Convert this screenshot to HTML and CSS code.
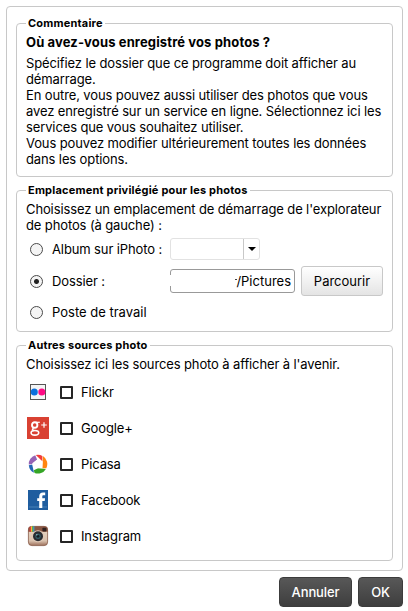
FILE: index.html
```html
<!DOCTYPE html>
<html lang="fr">
<head>
    <meta charset="UTF-8">
    <meta name="viewport" content="width=device-width, initial-scale=1.0">
    <title>Sources photo</title>
    <link rel="stylesheet" href="styles.css">
</head>
<body>
    <form class="dialog">
        <div class="panel">
            <fieldset class="group comment">
                <legend>Commentaire</legend>
                <h1>Où avez-vous enregistré vos photos ?</h1>
                <p>Spécifiez le dossier que ce programme doit afficher au<br>
                démarrage.<br>
                En outre, vous pouvez aussi utiliser des photos que vous<br>
                avez enregistré sur un service en ligne. Sélectionnez ici les<br>
                services que vous souhaitez utiliser.<br>
                Vous pouvez modifier ultérieurement toutes les données<br>
                dans les options.</p>
            </fieldset>

            <fieldset class="group location">
                <legend>Emplacement privilégié pour les photos</legend>
                <p>Choisissez un emplacement de démarrage de l'explorateur<br>
                de photos (à gauche) :</p>
                <div class="choice">
                    <label><input type="radio" name="location">Album sur iPhoto :</label>
                    <div class="combo">
                        <span class="combo-arrow"><svg width="8" height="4" viewBox="0 0 8 4"><path d="M0 0h8L4 4z"/></svg></span>
                    </div>
                </div>
                <div class="choice choice-folder">
                    <label><input type="radio" name="location" checked>Dossier :</label>
                    <div class="path">/Pictures</div>
                    <button type="button" class="btn-browse">Parcourir</button>
                </div>
                <div class="choice choice-desktop">
                    <label><input type="radio" name="location">Poste de travail</label>
                </div>
            </fieldset>

            <fieldset class="group sources">
                <legend>Autres sources photo</legend>
                <p>Choisissez ici les sources photo à afficher à l'avenir.</p>
                <label class="source">
                    <svg class="icon" width="22" height="22" viewBox="0 0 22 22">
                        <rect x="3.5" y="3.5" width="15" height="15" fill="#f5f5f5" stroke="#555"/>
                        <circle cx="7.3" cy="11" r="3.5" fill="#0a6fdc"/>
                        <circle cx="14.8" cy="11" r="3.5" fill="#ff0a84"/>
                    </svg>
                    <input type="checkbox">Flickr
                </label>
                <label class="source">
                    <svg class="icon" width="22" height="22" viewBox="0 0 22 22">
                        <rect width="22" height="22" fill="#d94132"/>
                        <g fill="none" stroke="#fff">
                            <ellipse cx="7.7" cy="8" rx="2.7" ry="2.8" stroke-width="1.9"/>
                            <path d="M8.5 5.3h4.3" stroke-width="1.2"/>
                            <path d="M6.6 11c-1.8 1.2-1.4 2.2.6 2.4" stroke-width="1.5"/>
                            <ellipse cx="7.9" cy="15.8" rx="3.8" ry="2.3" stroke-width="1.6"/>
                            <path d="M14.2 8h5.6M17 5.2v5.6" stroke-width="1.2"/>
                        </g>
                    </svg>
                    <input type="checkbox">Google+
                </label>
                <label class="source">
                    <svg class="icon" width="22" height="22" viewBox="0 0 22 22">
                        <path d="M8.8 2A9.3 9.3 0 0 1 15.4 2.9L15.3 8.2z" fill="#f23c38"/>
                        <path d="M15.9 3.1A9.3 9.3 0 0 1 19.3 15.2L15.4 15.3z" fill="#ff850f"/>
                        <path d="M6.8 17.2L11 15.3 18.9 15.9A9.3 9.3 0 0 1 7.6 20z" fill="#35a526"/>
                        <path d="M1.8 12.2L5.2 11.6 7 19.7A9.3 9.3 0 0 1 1.8 12.2z" fill="#2367b5"/>
                        <path d="M1.8 11.6A9.3 9.3 0 0 1 8.2 2.2L10.2 6.8 5.2 11z" fill="#9563b5"/>
                        <path d="M10.8 6l4.8 2.6-.4 6.5-8 .2-1.9-5z" fill="#fff"/>
                    </svg>
                    <input type="checkbox">Picasa
                </label>
                <label class="source">
                    <svg class="icon" width="22" height="22" viewBox="0 0 22 22">
                        <rect x="1" y="1" width="20" height="20" fill="#1f5d9f"/>
                        <rect x="2" y="17" width="18" height="2" fill="#336fab"/>
                        <path d="M12.2 19v-7h-2V9.2h2V7.5c0-2.7 1.4-3.9 3.8-3.9h2.2v2.7h-1.6c-1 0-1.3.5-1.3 1.4v1.5h2.8l-.4 2.8h-2.4v7z" fill="#fff"/>
                    </svg>
                    <input type="checkbox">Facebook
                </label>
                <label class="source">
                    <svg class="icon" width="22" height="22" viewBox="0 0 22 22">
                        <defs>
                            <linearGradient id="body" x1="0" y1="0" x2="0" y2="1">
                                <stop offset="0" stop-color="#ead9c7"/>
                                <stop offset=".75" stop-color="#d9c1ad"/>
                                <stop offset="1" stop-color="#9c6f5b"/>
                            </linearGradient>
                        </defs>
                        <rect x="1.4" y="1.4" width="19.2" height="19.2" rx="3.5" fill="url(#body)" stroke="#875946" stroke-width=".8"/>
                        <path d="M1.2 6.8V4.5a3.3 3.3 0 0 1 3.3-3.3h13a3.3 3.3 0 0 1 3.3 3.3v2.3z" fill="#895744"/>
                        <path d="M2.6 2h1.4v4.8H2.6z" fill="#e23b3b"/>
                        <path d="M4 1.2h1.2v5.6H4z" fill="#efc13a"/>
                        <path d="M5.2 1.2h1v5.6h-1z" fill="#5cb848"/>
                        <path d="M6.2 1.2h1.2v5.6H6.2z" fill="#31a4d3"/>
                        <rect x="15.4" y="2.8" width="4" height="3.6" rx=".8" fill="#30211f"/>
                        <circle cx="11" cy="11.3" r="6" fill="#ddc7b5"/>
                        <circle cx="11" cy="11.3" r="5" fill="#292b30"/>
                        <circle cx="11" cy="11.3" r="2.8" fill="#305761"/>
                        <circle cx="11" cy="11.3" r="1.4" fill="#141a20"/>
                        <circle cx="9.8" cy="9.8" r=".8" fill="#8db1bb"/>
                    </svg>
                    <input type="checkbox">Instagram
                </label>
            </fieldset>
        </div>

        <div class="actions">
            <button type="button" class="btn-dark btn-cancel">Annuler</button>
            <button type="button" class="btn-dark btn-ok">OK</button>
        </div>
    </form>
</body>
</html>
```
FILE: styles.css
```css
* {
    box-sizing: border-box;
}

body {
    margin: 0;
    background-color: #fff;
    color: #000;
    font-family: Inter, "Liberation Sans", sans-serif;
    font-size: 13px;
    line-height: 16px;
    letter-spacing: -0.12px;
}

.dialog {
    width: 408px;
    height: 611px;
    padding: 6px 5px 0 6px;
}

.panel {
    display: flex;
    flex-direction: column;
    gap: 6px;
    width: 397px;
    height: 565px;
    padding: 9px;
    border: 1px solid #c8c8c8;
    border-radius: 4px;
}

.group {
    margin: 0;
    padding: 0 9px;
    border: 1px solid #c8c8c8;
    border-radius: 4px;
    min-width: 0;
    white-space: nowrap;
}

.group legend {
    padding: 0 2px;
    font-size: 11px;
    font-weight: 700;
    line-height: 15px;
    letter-spacing: 0.2px;
}

.group p {
    margin: 0;
}

.comment {
    height: 161px;
}

.comment h1 {
    margin: 3px 0 5px;
    font-size: 13px;
    font-weight: 700;
    line-height: 16px;
    letter-spacing: 0.13px;
}

.location {
    height: 149px;
}

.location p {
    padding: 3px 0 5px;
}

.choice {
    display: flex;
    align-items: center;
    height: 22px;
    margin-bottom: 6px;
}

.choice-folder {
    height: 30px;
    margin-bottom: 5px;
}

.choice-desktop {
    letter-spacing: 0;
}

.choice label {
    display: flex;
    align-items: center;
    width: 144px;
}

input[type="radio"] {
    appearance: none;
    width: 13px;
    height: 13px;
    margin: 0 9px 0 4px;
    border: 1px solid #4a4a4a;
    border-radius: 50%;
    background-color: #f4f4f4;
}

input[type="radio"]:checked {
    background-image: radial-gradient(circle, #222 2px, transparent 3px);
}

.combo {
    display: flex;
    justify-content: flex-end;
    width: 90px;
    height: 22px;
    border: 1px solid #e2e2e2;
    border-radius: 3px;
}

.combo-arrow {
    display: flex;
    align-items: center;
    justify-content: center;
    width: 16px;
    border-left: 1px solid #c8c8c8;
}

.path {
    position: relative;
    width: 125px;
    height: 24px;
    padding-right: 3px;
    border: 1px solid #999;
    border-radius: 3px;
    line-height: 22px;
    letter-spacing: 0;
    text-align: right;
}

/* blanked user name, runs over the left edge of the field */
.path::before {
    content: "";
    position: absolute;
    left: -1px;
    top: 5px;
    width: 60px;
    height: 11px;
    background-color: #fff;
}

.path::after {
    content: "";
    position: absolute;
    left: 64px;
    top: 9px;
    width: 2px;
    height: 1px;
    background-color: #444;
}

button {
    padding: 0;
    font-family: inherit;
    font-size: 13px;
    letter-spacing: inherit;
    cursor: pointer;
}

.btn-browse {
    width: 82px;
    height: 30px;
    margin-left: 6px;
    border: 1px solid #c8c8c8;
    border-radius: 3px;
    background: linear-gradient(#fff, #e4e4e4);
    color: #000;
    letter-spacing: 0;
}

.sources {
    height: 223px;
}

.sources p {
    padding: 3px 0 2px;
}

.source {
    display: flex;
    align-items: center;
    height: 36px;
}

.icon {
    margin-left: 1px;
}

input[type="checkbox"] {
    appearance: none;
    width: 13px;
    height: 13px;
    margin: 0 8px 0 11px;
    border: 2px solid #262626;
    border-radius: 1px;
    background-color: #fff;
}

.actions {
    display: flex;
    justify-content: flex-end;
    gap: 6px;
    margin-top: 6px;
}

.btn-dark {
    height: 30px;
    border: 1px solid #3c3c3c;
    border-radius: 4px;
    background: linear-gradient(#585858, #3e3e3e);
    color: #fff;
    font-weight: 500;
}

.btn-cancel {
    width: 73px;
}

.btn-ok {
    width: 45px;
}
```
